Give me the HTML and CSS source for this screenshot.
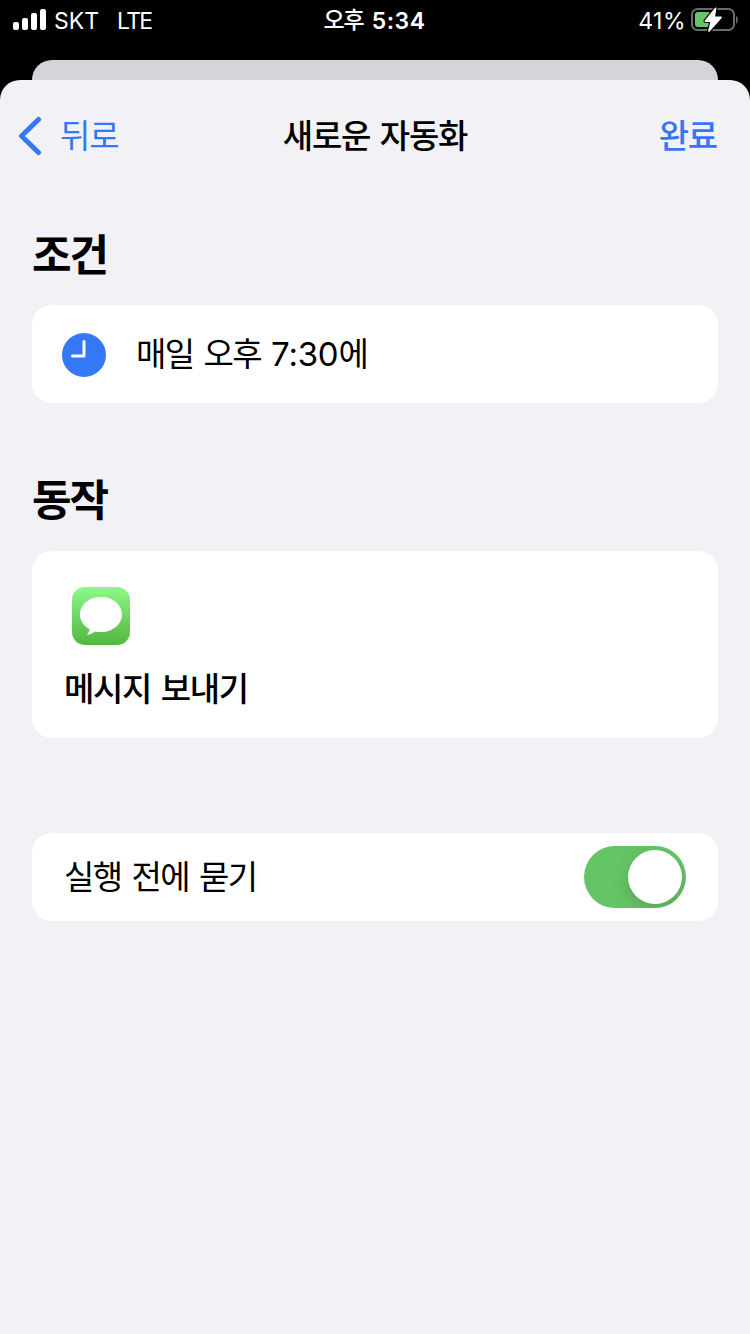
FILE: index.html
```html
<!DOCTYPE html>
<html lang="ko">
<head>
  <meta charset="UTF-8" />
  <meta name="viewport" content="width=device-width, initial-scale=1" />
  <title>새로운 자동화</title>
  <link rel="stylesheet" href="styles.css">
</head>
<body>

  <header class="status-bar">
    <div class="status-left">
      <svg class="signal" width="34" height="22" viewBox="0 0 34 22" fill="#fff">
        <rect x="0" y="13" width="6" height="8" rx="2" />
        <rect x="9" y="9" width="6" height="12" rx="2" />
        <rect x="18" y="4" width="6" height="17" rx="2" />
        <rect x="27" y="0" width="6" height="21" rx="2" />
      </svg>
      <span class="carrier">SKT</span>
      <span class="network">LTE</span>
    </div>
    <div class="clock"><span class="ampm">오후</span><span class="time">5:34</span></div>
    <div class="status-right">
      <span class="percent">41%</span>
      <svg class="battery" width="50" height="26" viewBox="0 0 50 26">
        <rect x="2" y="2" width="42" height="21" rx="5.500" fill="none" stroke="#6b6b6b" stroke-width="2" />
        <path d="M46 9c2.400 1.200 2.400 6.300 0 7.500z" fill="#6b6b6b" />
        <rect x="5" y="5" width="16" height="15" rx="3" fill="#65c466" />
        <path d="M25.500 1.500L15.500 14H21.500L19 24 31 10.500H24z" fill="#fff" stroke="#000" stroke-width="4" paint-order="stroke" stroke-linejoin="round" />
        <path d="M25.500 1.500L15.500 14H21.500L19 24 31 10.500H24z" fill="#fff" stroke="#fff" stroke-width="1.800" stroke-linejoin="round" />
      </svg>
    </div>
  </header>

  <div class="back-sheet"></div>

  <main class="sheet">
    <nav class="nav">
      <a class="nav-back">
        <svg width="24" height="40" viewBox="0 0 24 40" fill="none" stroke="#3478f6" stroke-width="5" stroke-linecap="round" stroke-linejoin="round">
          <path d="M20.500 3.500L3.500 20l17 16.500" />
        </svg>
        <span>뒤로</span>
      </a>
      <h1 class="nav-title">새로운 자동화</h1>
      <a class="nav-done">완료</a>
    </nav>

    <section class="section">
      <h2 class="section-title">조건</h2>
      <div class="card card-when">
        <svg class="when-icon" width="44" height="44" viewBox="0 0 44 44">
          <circle cx="22" cy="22" r="22" fill="#3478f6" />
          <path d="M22 8.500v14.500H10.500" fill="none" stroke="#fff" stroke-width="3" stroke-linecap="round" stroke-linejoin="round" />
        </svg>
        <span class="when-text">매일 오후 <span class="digits">7:30</span>에</span>
      </div>
    </section>

    <section class="section section-action">
      <h2 class="section-title">동작</h2>
      <div class="card card-action">
        <svg class="app-icon" width="58" height="58" viewBox="0 0 58 58">
          <defs>
            <linearGradient id="messages" x1="0" y1="0" x2="0" y2="1">
              <stop offset="0" stop-color="#8ff88a" />
              <stop offset="1" stop-color="#53b73f" />
            </linearGradient>
          </defs>
          <rect width="58" height="58" rx="13" fill="url(#messages)" />
          <path d="M29 10C17.400 10 8 17.800 8 27.500c0 6.200 3.800 11.600 9.700 14.700-.3 2.200-1.300 4-2.900 5.500 3.100-.1 6-1.400 8.200-3.200 1.900.4 3.900.6 6 .6 11.600 0 21-7.900 21-17.600S40.600 10 29 10z" fill="#fff" />
        </svg>
        <span class="action-name">메시지 보내기</span>
      </div>
    </section>

    <div class="card card-toggle">
      <span class="toggle-label">실행 전에 묻기</span>
      <span class="switch"><span class="knob"></span></span>
    </div>
  </main>

</body>
</html>
```
FILE: styles.css
```css
* {
  box-sizing: border-box;
}
body {
  margin: 0;
  min-height: 1334px;
  display: flex;
  flex-direction: column;
  background: #000;
  color: #000;
  font-family: Inter, "Noto Sans CJK KR", sans-serif;
  font-size: 33px;
  line-height: 40px;
  white-space: nowrap;
}
h1, h2 {
  margin: 0;
}
svg {
  display: block;
  flex: none;
}

/* status bar */
.status-bar {
  height: 60px;
  padding: 0 10px 20px 13px;
  display: grid;
  grid-template-columns: 1fr auto 1fr;
  align-items: center;
  color: #fff;
  font-size: 23px;
}
.status-left {
  display: flex;
  align-items: center;
}
.signal,
.battery {
  margin-bottom: 2px;
}
.carrier,
.network,
.percent,
.time {
  padding-top: 1px;
}
.carrier {
  margin-left: 7px;
}
.network {
  margin-left: 18px;
  letter-spacing: -1.7px;
}
.clock {
  display: flex;
  gap: 8px;
  margin-left: -4px;
  font-weight: 600;
}
.ampm {
  font-weight: 500;
  letter-spacing: -1px;
}
.time {
  letter-spacing: 0.5px;
}
.status-right {
  display: flex;
  justify-content: flex-end;
  align-items: center;
  gap: 4px;
}
.percent {
  letter-spacing: 0.5px;
}

/* sheets */
.back-sheet {
  height: 20px;
  margin: 0 32px;
  border-radius: 20px 20px 0 0;
  background: #d5d4d9;
}
.sheet {
  flex: 1;
  padding: 0 32px;
  border-radius: 20px 20px 0 0;
  background: #f1f1f6;
}
.nav {
  height: 112px;
  margin: 0 -14px;
  padding-right: 15px;
  display: grid;
  grid-template-columns: 1fr auto 1fr;
  align-items: center;
  color: #3478f6;
  letter-spacing: -1.2px;
  word-spacing: 2px;
}
.nav-back {
  display: flex;
  align-items: center;
  gap: 18px;
}
.nav-title {
  margin: 0 -15px 0 0;
  color: #000;
  font-size: 33px;
  font-weight: 500;
}
.nav-done {
  text-align: right;
  font-weight: 500;
}

/* sections */
.section {
  padding-top: 38px;
}
.section-action {
  padding-top: 72px;
}
.section-title {
  height: 75px;
  font-size: 43px;
  line-height: 50px;
  font-weight: 700;
  letter-spacing: -2px;
}
.section-action .section-title {
  height: 76px;
}
.card {
  border-radius: 20px;
  background: #fff;
}
.card-when {
  height: 98px;
  padding: 0 30px;
  display: flex;
  align-items: center;
  gap: 30px;
}
.when-icon {
  margin-top: 2px;
}
.when-text,
.action-name,
.toggle-label {
  letter-spacing: -1.5px;
  word-spacing: 2px;
}
.when-text .digits {
  letter-spacing: -0.2px;
}
.card-action {
  height: 187px;
  padding: 36px 32px 0;
}
.app-icon {
  margin: 0 0 24px 8px;
}
.action-name {
  font-weight: 500;
  letter-spacing: -1.3px;
}
.card-toggle {
  height: 88px;
  margin-top: 95px;
  padding: 0 32px;
  display: flex;
  align-items: center;
  justify-content: space-between;
}
.switch {
  width: 102px;
  height: 62px;
  padding: 4px;
  display: flex;
  justify-content: flex-end;
  border-radius: 31px;
  background: #65c466;
  overflow: hidden;
}
.knob {
  width: 54px;
  height: 54px;
  border-radius: 50%;
  background: #fff;
  box-shadow: 0 6px 16px rgba(0, 0, 0, 0.15);
}
```
